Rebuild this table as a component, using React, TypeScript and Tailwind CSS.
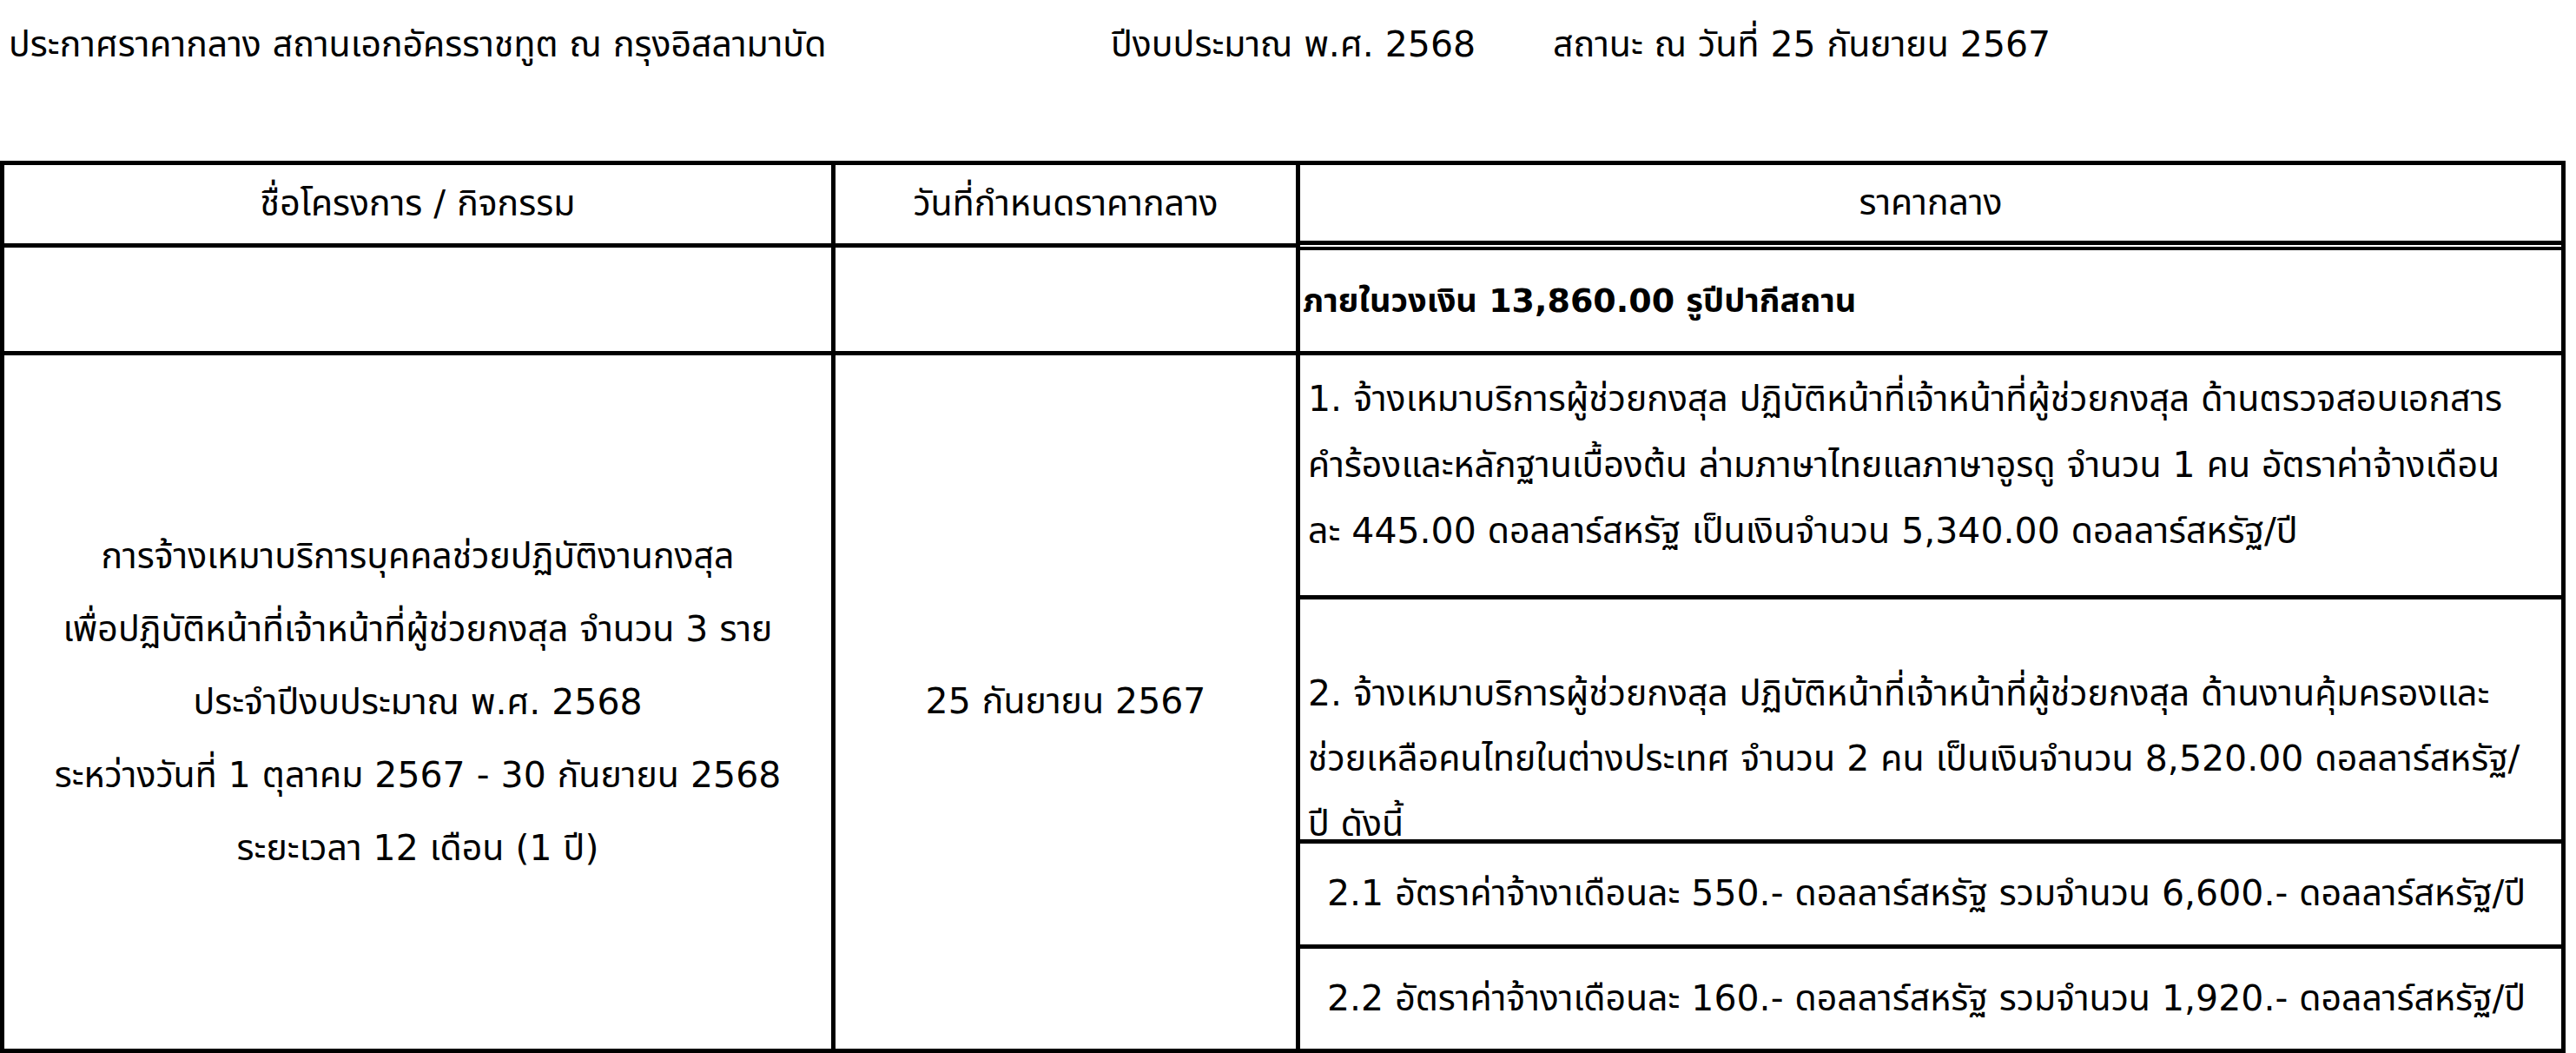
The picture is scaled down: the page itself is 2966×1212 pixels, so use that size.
import React from "react";

const FONT = {
  fontFamily: '"DejaVu Sans", "Noto Sans Thai", "Loma", "Garuda", sans-serif',
};

function Lines({ lines, className }: { lines: string[]; className?: string }) {
  return (
    <div className={className}>
      {lines.map((l, i) => (
        <div key={i} className="whitespace-nowrap">
          {l}
        </div>
      ))}
    </div>
  );
}

export default function App() {
  return (
    <div
      className="w-[2966px] h-[1212px] overflow-hidden bg-white text-black text-[41px]"
      style={FONT}
    >
      {/* Title row */}
      <div className="grid grid-cols-[1279px_509px_1fr] h-[185px] pt-[26px] leading-[50px]">
        <div className="pl-[10px] whitespace-nowrap">ประกาศราคากลาง สถานเอกอัครราชทูต ณ กรุงอิสลามาบัด</div>
        <div className="whitespace-nowrap">ปีงบประมาณ พ.ศ. 2568</div>
        <div className="whitespace-nowrap">สถานะ ณ วันที่ 25 กันยายน 2567</div>
      </div>

      {/* Table */}
      <div className="w-[2954px] h-[1027px] border-[5px] border-black flex">
        {/* Column 1 */}
        <div className="w-[957px] border-r-[5px] border-black flex flex-col">
          <div className="h-[95px] border-b-[5px] border-black flex items-center justify-center">
            <span className="whitespace-nowrap">ชื่อโครงการ / กิจกรรม</span>
          </div>
          <div className="h-[124px] border-b-[5px] border-black" />
          <div className="flex-1 flex items-center justify-center">
            <Lines
              className="text-center leading-[84px]"
              lines={[
                "การจ้างเหมาบริการบุคคลช่วยปฏิบัติงานกงสุล",
                "เพื่อปฏิบัติหน้าที่เจ้าหน้าที่ผู้ช่วยกงสุล จำนวน 3 ราย",
                "ประจำปีงบประมาณ พ.ศ. 2568",
                "ระหว่างวันที่ 1 ตุลาคม 2567 - 30 กันยายน 2568",
                "ระยะเวลา 12 เดือน (1 ปี)",
              ]}
            />
          </div>
        </div>

        {/* Column 2 */}
        <div className="w-[535px] border-r-[5px] border-black flex flex-col">
          <div className="h-[95px] border-b-[5px] border-black flex items-center justify-center">
            <span className="whitespace-nowrap">วันที่กำหนดราคากลาง</span>
          </div>
          <div className="h-[124px] border-b-[5px] border-black" />
          <div className="flex-1 flex items-center justify-center">
            <span className="whitespace-nowrap">25 กันยายน 2567</span>
          </div>
        </div>

        {/* Column 3 (nested table) */}
        <div className="flex-1 flex flex-col">
          <div className="h-[92px] border-b-[5px] border-black flex items-center justify-center">
            <span className="whitespace-nowrap">ราคากลาง</span>
          </div>
          <div className="h-[2px]" />
          <div className="h-[125px] border-t-[4px] border-b-[5px] border-black flex items-center pl-[3px]">
            <span className="whitespace-nowrap font-bold text-[38px]">ภายในวงเงิน 13,860.00 รูปีปากีสถาน</span>
          </div>
          <div className="h-[281px] border-b-[5px] border-black pl-[9px] pt-[12px]">
            <Lines
              className="leading-[76px]"
              lines={[
                "1. จ้างเหมาบริการผู้ช่วยกงสุล ปฏิบัติหน้าที่เจ้าหน้าที่ผู้ช่วยกงสุล ด้านตรวจสอบเอกสาร",
                "คำร้องและหลักฐานเบื้องต้น ล่ามภาษาไทยแลภาษาอูรดู จำนวน 1 คน อัตราค่าจ้างเดือน",
                "ละ 445.00 ดอลลาร์สหรัฐ เป็นเงินจำนวน 5,340.00 ดอลลาร์สหรัฐ/ปี",
              ]}
            />
          </div>
          <div className="h-[281px] border-b-[5px] border-black pl-[9px] pt-[71px] overflow-hidden">
            <Lines
              className="leading-[75px]"
              lines={[
                "2. จ้างเหมาบริการผู้ช่วยกงสุล ปฏิบัติหน้าที่เจ้าหน้าที่ผู้ช่วยกงสุล ด้านงานคุ้มครองและ",
                "ช่วยเหลือคนไทยในต่างประเทศ จำนวน 2 คน เป็นเงินจำนวน 8,520.00 ดอลลาร์สหรัฐ/",
                "ปี ดังนี้",
              ]}
            />
          </div>
          <div className="h-[121px] border-b-[5px] border-black flex items-center pl-[31px]">
            <span className="whitespace-nowrap">
              2.1 อัตราค่าจ้างาเดือนละ 550.- ดอลลาร์สหรัฐ รวมจำนวน 6,600.- ดอลลาร์สหรัฐ/ปี
            </span>
          </div>
          <div className="flex-1 flex items-center pl-[31px]">
            <span className="whitespace-nowrap">
              2.2 อัตราค่าจ้างาเดือนละ 160.- ดอลลาร์สหรัฐ รวมจำนวน 1,920.- ดอลลาร์สหรัฐ/ปี
            </span>
          </div>
        </div>
      </div>
    </div>
  );
}
